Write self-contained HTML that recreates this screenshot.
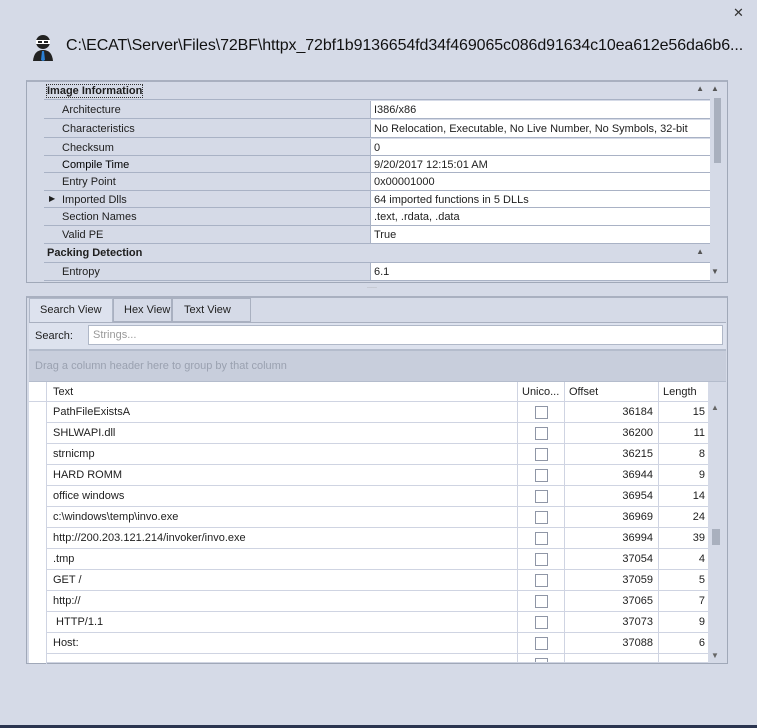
<!DOCTYPE html>
<html><head><style>
*{box-sizing:border-box;margin:0;padding:0}
body{width:757px;height:728px;background:#d5dae7;font-family:"Liberation Sans",sans-serif;font-size:11px;color:#1e1e1e;position:relative;overflow:hidden}
.a{position:absolute;white-space:nowrap}
.row{position:absolute;left:44px;width:666px;height:18px;border-bottom:1px solid #a9b2c5;background:#d5dae7}
.row .k{position:absolute;left:18px;top:3px}
.row .v{position:absolute;left:326px;top:0;bottom:0;right:0;background:#fff;border-left:1px solid #a9b2c5;padding:3px 3px}
.g{position:absolute;left:30px;width:678px;height:21px;background:#fff;border-bottom:1px solid #cfd4e2;overflow:hidden}
.g div{position:absolute;top:0;height:20px;line-height:20px}
.g div.cb{position:absolute;top:4px;width:13px;height:13px;border:1px solid #8f96a6;background:#fff;line-height:normal}
</style></head><body>
<div class="a" style="left:733px;top:5px;font-size:13px;color:#333">✕</div>
<svg class="a" style="left:31px;top:34px" width="24" height="28" viewBox="0 0 24 28">
<circle cx="12" cy="8" r="7" fill="#222"/><rect x="5" y="6" width="14" height="4" fill="#fff"/><rect x="7" y="7" width="4" height="2" fill="#222"/><rect x="13" y="7" width="4" height="2" fill="#222"/>
<path d="M2 27 Q3 16 12 16 Q21 16 22 27Z" fill="#222"/><path d="M11 17 L13 17 L14 26 L12 27 L10 26Z" fill="#2a7fd4"/></svg>
<div class="a" style="left:66px;top:37px;font-size:16px;color:#111;letter-spacing:-0.1px">C:\ECAT\Server\Files\72BF\httpx_72bf1b9136654fd34f469065c086d91634c10ea612e56da6b6...</div>

<div class="a" style="left:26px;top:80px;width:702px;height:203px;border:1px solid #a0a8b8;border-top:2px solid #a9b0c0;background:#d5dae7"></div>
<div class="a" style="left:44px;top:82px;width:666px;height:18px;border-bottom:1px solid #a9b2c5"><span class="a" style="left:3px;top:3px;font-weight:bold;outline:1px dotted #333">Image Information</span><span class="a" style="right:6px;top:2px;font-size:8px;color:#555">▲</span></div>
<div class="row" style="top:101px"><span class="k">Architecture</span><div class="v">I386/x86</div></div>
<div class="row" style="top:120px"><span class="k">Characteristics</span><div class="v">No Relocation, Executable, No Live Number, No Symbols, 32-bit</div></div>
<div class="row" style="top:139px;height:17px"><span class="k">Checksum</span><div class="v">0</div></div>
<div class="row" style="top:156px;height:17px"><span class="k" style="color:#000">Compile Time</span><div class="v">9/20/2017 12:15:01 AM</div></div>
<div class="row" style="top:173px"><span class="k">Entry Point</span><div class="v">0x00001000</div></div>
<div class="row" style="top:191px;height:17px"><span class="a" style="left:5px;top:3px;font-size:8px">▶</span><span class="k">Imported Dlls</span><div class="v">64 imported functions in 5 DLLs</div></div>
<div class="row" style="top:208px"><span class="k">Section Names</span><div class="v">.text, .rdata, .data</div></div>
<div class="row" style="top:226px"><span class="k">Valid PE</span><div class="v">True</div></div>
<div class="a" style="left:44px;top:244px;width:666px;height:19px;border-bottom:1px solid #a9b2c5"><span class="a" style="left:3px;top:3px;font-weight:bold">Packing Detection</span><span class="a" style="right:6px;top:3px;font-size:8px;color:#555">▲</span></div>
<div class="row" style="top:263px"><span class="k">Entropy</span><div class="v">6.1</div></div>
<div class="a" style="left:711px;top:84px;font-size:8px;color:#555">▲</div>
<div class="a" style="left:714px;top:98px;width:7px;height:65px;background:#a9b0be"></div>
<div class="a" style="left:711px;top:267px;font-size:8px;color:#555">▼</div>
<div class="a" style="left:367px;top:285px;font-size:6px;color:#888">·····</div>

<div class="a" style="left:26px;top:296px;width:702px;height:368px;border:1px solid #a0a8b8;border-top:2px solid #a9b0c0;background:#d5dae7"></div>
<div class="a" style="left:29px;top:298px;width:84px;height:25px;border:1px solid #b0b8c8;border-bottom:none;padding:5px 10px;background:#dde2ee">Search View</div>
<div class="a" style="left:113px;top:298px;width:59px;height:24px;border:1px solid #a9b0c0;padding:5px 10px">Hex View</div>
<div class="a" style="left:172px;top:298px;width:79px;height:24px;border:1px solid #a9b0c0;padding:5px 11px">Text View</div>
<div class="a" style="left:29px;top:322px;width:697px;height:27px;border-top:1px solid #a9b0c0;background:#dde2ee"></div>
<div class="a" style="left:35px;top:330px">Search:</div>
<div class="a" style="left:88px;top:325px;width:635px;height:20px;background:#fff;border:1px solid #b0b8c8;padding:3px 4px;color:#999">Strings...</div>
<div class="a" style="left:29px;top:349px;width:697px;height:33px;background:#c8cedc;border-top:2px solid #b4bccc;border-bottom:1px solid #b4bccc"></div>
<div class="a" style="left:35px;top:360px;color:#9aa1b0">Drag a column header here to group by that column</div>
<div class="a" style="left:29px;top:382px;width:679px;height:20px;background:#fff;border-bottom:1px solid #cfd4e2"></div>
<div class="a" style="left:46px;top:382px;width:1px;height:282px;background:#cfd4e2"></div>
<div class="a" style="left:53px;top:386px">Text</div>
<div class="a" style="left:517px;top:382px;width:1px;height:20px;background:#cfd4e2"></div>
<div class="a" style="left:522px;top:386px">Unico...</div>
<div class="a" style="left:564px;top:382px;width:1px;height:20px;background:#cfd4e2"></div>
<div class="a" style="left:569px;top:386px">Offset</div>
<div class="a" style="left:658px;top:382px;width:1px;height:20px;background:#cfd4e2"></div>
<div class="a" style="left:663px;top:386px">Length</div>
<div class="a" style="left:708px;top:402px;width:17px;height:261px;background:#d5dae7"></div>
<div class="a" style="left:711px;top:403px;font-size:8px;color:#666">▲</div>
<div class="a" style="left:712px;top:529px;width:8px;height:16px;background:#a9b0be"></div>
<div class="a" style="left:711px;top:651px;font-size:8px;color:#666">▼</div>
<div class="a" style="left:29px;top:402px;width:17px;height:261px;background:#fff"></div>
<div id="grid"></div>
<div class="a" style="left:0;top:725px;width:757px;height:3px;background:#2b3550"></div>
<script>
var d=[["PathFileExistsA",36184,15],["SHLWAPI.dll",36200,11],["strnicmp",36215,8],["HARD ROMM",36944,9],["office windows",36954,14],["c:\\windows\\temp\\invo.exe",36969,24],["http://200.203.121.214/invoker/invo.exe",36994,39],[".tmp",37054,4],["GET /",37059,5],["http://",37065,7],[" HTTP/1.1",37073,9],["Host:",37088,6],["",37095,11]];
var h="";d.forEach(function(r,i){var t=402+i*21;var ht=i==12?663-t:21;
h+='<div class="g" style="left:47px;width:661px;top:'+t+'px;height:'+ht+'px"><div style="left:6px;white-space:pre">'+r[0]+'</div><div style="left:470px;width:1px;background:#cfd4e2"></div><div class="cb" style="left:488px"></div><div style="left:517px;width:1px;background:#cfd4e2"></div><div style="left:518px;width:88px;text-align:right">'+(i==12?'':r[1])+'</div><div style="left:611px;width:1px;background:#cfd4e2"></div><div style="left:612px;width:46px;text-align:right">'+(i==12?'':r[2])+'</div></div>';});
document.getElementById("grid").innerHTML=h;
</script>
</body></html>
